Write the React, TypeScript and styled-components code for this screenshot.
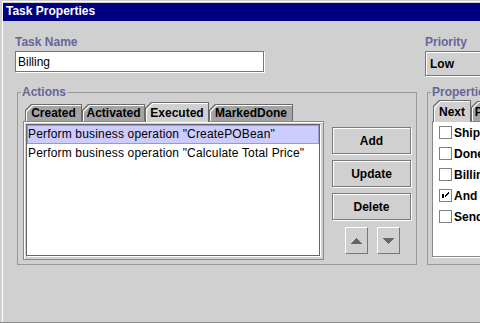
import React from "react";
import styled, { createGlobalStyle } from "styled-components";

const BG = "#d0d0d0";
const LABEL = "#666699";

const Global = createGlobalStyle`
  html, body { margin: 0; padding: 0; background: ${BG}; overflow: hidden; }
  body { font-family: "Liberation Sans", Arial, sans-serif; font-size: 12px; color: #000; }
  * { box-sizing: border-box; }
`;

const Frame = styled.div`
  width: 480px;
  height: 323px;
  overflow: hidden;
  background: ${BG};
  padding: 1px 0 0 2px;
  border-bottom: 1px solid #8c8c8c;
`;

const FrameInner = styled.div`
  height: 100%;
  border-top: 1px solid #fff;
  border-left: 1px solid #fff;
  padding-top: 1px;
  display: flex;
  flex-direction: column;
`;

const TitleBar = styled.div`
  height: 18px;
  flex: none;
  background: #000080;
  color: #fff;
  font-weight: bold;
  font-size: 12px;
  line-height: 14px;
  padding: 0 0 2px 3px;
  display: flex;
  align-items: center;
  white-space: nowrap;
`;

const Body = styled.div`
  flex: 1;
  padding: 14px 0 0 12px;
  display: flex;
  flex-direction: column;
`;

const TopRow = styled.div`
  display: grid;
  grid-template-columns: 250px 150px;
  column-gap: 160px;
`;

const Field = styled.div`
  display: flex;
  flex-direction: column;
`;

const Label = styled.div`
  color: ${LABEL};
  font-weight: bold;
  font-size: 12px;
  line-height: 14px;
  height: 14px;
  margin-bottom: 2px;
  white-space: nowrap;
`;

const TextInput = styled.input`
  width: 249px;
  height: 21px;
  margin: 0;
  border: 1px solid #777;
  box-shadow: 1px 1px 0 #fff;
  background: #fff;
  padding: 0 0 0 2px;
  font-family: "Liberation Sans", Arial, sans-serif;
  font-size: 12px;
  color: #000;
  outline: none;
`;

const Combo = styled.div`
  height: 25px;
  width: 150px;
  border: 1px solid #777;
  box-shadow: 1px 1px 0 #fff, inset 1px 1px 0 #fff;
  padding-left: 4px;
  display: flex;
  align-items: center;
  font-weight: bold;
  font-size: 12px;
`;

const PanelsRow = styled.div`
  display: flex;
  align-items: flex-start;
  margin-top: 9px;
`;

const GroupBox = styled.fieldset<{ $w: number; $ml: number }>`
  margin: 0 0 0 ${(p) => p.$ml}px;
  padding: 0;
  width: ${(p) => p.$w}px;
  min-width: 0;
  flex: none;
  border: 1px solid #999;
`;

const Legend = styled.legend`
  padding: 0 1px;
  margin-left: 3px;
  color: ${LABEL};
  font-weight: bold;
  font-size: 12px;
  line-height: 14px;
  white-space: nowrap;
`;

const ActionsContent = styled.div`
  display: flex;
  align-items: flex-start;
  gap: 8px;
  padding: 3px 4px 4px 5px;
`;

const PropsContent = styled.div`
  padding: 1px 0 7px 4px;
`;

const TabbedPane = styled.div<{ $w: number }>`
  width: ${(p) => p.$w}px;
  flex: none;
  display: flex;
  flex-direction: column;
`;

const TabRow = styled.div<{ $h: number; $pl: number }>`
  display: flex;
  align-items: flex-end;
  height: ${(p) => p.$h}px;
  padding-left: ${(p) => p.$pl}px;
  position: relative;
  z-index: 1;
`;

const Tab = styled.div<{ $w: number; $h: number; $sel?: boolean }>`
  position: relative;
  flex: none;
  width: ${(p) => p.$w}px;
  height: ${(p) => p.$h}px;
  margin-bottom: ${(p) => (p.$sel ? -1 : 0)}px;
  background: #6a6a6a;
  clip-path: polygon(0 6px, 6px 0, 100% 0, 100% 100%, 0 100%);
  display: flex;
  align-items: center;
  justify-content: center;
  padding-top: 1px;
  font-weight: bold;
  font-size: 12px;
  white-space: nowrap;
  &::before {
    content: "";
    position: absolute;
    inset: 1px 1px 0 1px;
    background: #fff;
    clip-path: polygon(0 6px, 6px 0, 100% 0, 100% 100%, 0 100%);
  }
  &::after {
    content: "";
    position: absolute;
    inset: 2px 1px 0 2px;
    background: ${(p) => (p.$sel ? BG : "#a4a4a4")};
    clip-path: polygon(0 6px, 6px 0, 100% 0, 100% 100%, 0 100%);
  }
`;

const TabText = styled.span`
  position: relative;
  z-index: 1;
`;

const TabContent = styled.div`
  height: 139px;
  display: flex;
  border: 1px solid #888;
  box-shadow: inset 1px 1px 0 #fff;
  padding: 2px 3px 3px 2px;
`;

const List = styled.div`
  flex: 1;
  background: #fff;
  border: 1px solid #666;
  box-shadow: 1px 1px 0 #fff;
  display: flex;
  flex-direction: column;
  overflow: hidden;
`;

const ListRow = styled.div<{ $sel?: boolean }>`
  height: 19px;
  line-height: 17px;
  border: 1px solid ${(p) => (p.$sel ? "#9999cc" : "transparent")};
  background: ${(p) => (p.$sel ? "#ccccff" : "transparent")};
  font-size: 12px;
  letter-spacing: 0.17px;
  white-space: nowrap;
`;

const ButtonColumn = styled.div`
  width: 80px;
  flex: none;
  padding-top: 25px;
  display: flex;
  flex-direction: column;
  gap: 6px;
`;

const PushButton = styled.button`
  width: 79px;
  height: 27px;
  margin: 0;
  padding: 0;
  border: 1px solid #7a7a7a;
  box-shadow: 1px 1px 0 #fff, inset 1px 1px 0 #fff;
  background: ${BG};
  font-family: "Liberation Sans", Arial, sans-serif;
  font-weight: bold;
  font-size: 12px;
  color: #000;
`;

const ArrowRow = styled.div`
  display: flex;
  justify-content: center;
  gap: 9px;
  margin-top: 1px;
`;

const ArrowButton = styled.button`
  width: 23px;
  height: 27px;
  margin: 0;
  padding: 0;
  border-top: 1px solid #fff;
  border-left: 1px solid #fff;
  border-right: 1px solid #777;
  border-bottom: 1px solid #777;
  background: ${BG};
  display: flex;
  align-items: center;
  justify-content: center;
`;

const PropsPanel = styled.div`
  height: 136px;
  border: 1px solid #888;
  box-shadow: 1px 1px 0 #fff;
  background: #fff;
  padding-left: 6px;
  display: flex;
  flex-direction: column;
`;

const CheckRow = styled.div`
  height: 21px;
  display: flex;
  align-items: center;
  gap: 1px;
  font-weight: bold;
  font-size: 12px;
  white-space: nowrap;
`;

const CheckBox = styled.span`
  width: 13px;
  height: 13px;
  flex: none;
  border: 1px solid #808080;
  margin-right: 1px;
  display: flex;
`;

const Arrow = ({ down }: { down?: boolean }) => (
  <svg width="11" height="6" viewBox="0 0 11 6" shapeRendering="crispEdges">
    <polygon points={down ? "0,0 11,0 5.5,6" : "5.5,0 11,6 0,6"} fill="#666" />
  </svg>
);

const Check = () => (
  <svg width="11" height="11" viewBox="0 0 11 11" shapeRendering="crispEdges">
    <rect x="2" y="4" width="2" height="4" fill="#000" />
    <path d="M8.5 2.5 L4.5 6.5 M8.5 3.5 L4.5 7.5" stroke="#000" strokeWidth="1" />
  </svg>
);

const actionTabs = [
  { label: "Created", w: 57 },
  { label: "Activated", w: 63 },
  { label: "Executed", w: 64, sel: true },
  { label: "MarkedDone", w: 84 },
];

const actions = [
  'Perform business operation "CreatePOBean"',
  'Perform business operation "Calculate Total Price"',
];

const props = [
  { label: "Shipping", checked: false },
  { label: "Done", checked: false },
  { label: "Billing", checked: false },
  { label: "And Join", checked: true },
  { label: "Send Invoice", checked: false },
];

export default function App() {
  return (
    <>
      <Global />
      <Frame>
        <FrameInner>
          <TitleBar>Task Properties</TitleBar>
          <Body>
            <TopRow>
              <Field>
                <Label>Task Name</Label>
                <TextInput readOnly defaultValue="Billing" />
              </Field>
              <Field>
                <Label>Priority</Label>
                <Combo>Low</Combo>
              </Field>
            </TopRow>
            <PanelsRow>
              <GroupBox $w={400} $ml={2}>
                <Legend>Actions</Legend>
                <ActionsContent>
                  <TabbedPane $w={301}>
                    <TabRow $h={19} $pl={2}>
                      {actionTabs.map((t) => (
                        <Tab key={t.label} $w={t.w} $h={t.sel ? 20 : 17} $sel={t.sel}>
                          <TabText>{t.label}</TabText>
                        </Tab>
                      ))}
                    </TabRow>
                    <TabContent>
                      <List>
                        {actions.map((a, i) => (
                          <ListRow key={a} $sel={i === 0}>
                            {a}
                          </ListRow>
                        ))}
                      </List>
                    </TabContent>
                  </TabbedPane>
                  <ButtonColumn>
                    <PushButton>Add</PushButton>
                    <PushButton>Update</PushButton>
                    <PushButton>Delete</PushButton>
                    <ArrowRow>
                      <ArrowButton>
                        <Arrow />
                      </ArrowButton>
                      <ArrowButton>
                        <Arrow down />
                      </ArrowButton>
                    </ArrowRow>
                  </ButtonColumn>
                </ActionsContent>
              </GroupBox>
              <GroupBox $w={220} $ml={10}>
                <Legend>Properties</Legend>
                <PropsContent>
                  <TabbedPane $w={200}>
                    <TabRow $h={21} $pl={1}>
                      <Tab $w={38} $h={22} $sel>
                        <TabText>Next</TabText>
                      </Tab>
                      <Tab $w={58} $h={20}>
                        <TabText>Previous</TabText>
                      </Tab>
                    </TabRow>
                    <PropsPanel>
                      {props.map((p) => (
                        <CheckRow key={p.label}>
                          <CheckBox>{p.checked && <Check />}</CheckBox>
                          {p.label}
                        </CheckRow>
                      ))}
                    </PropsPanel>
                  </TabbedPane>
                </PropsContent>
              </GroupBox>
            </PanelsRow>
          </Body>
        </FrameInner>
      </Frame>
    </>
  );
}
